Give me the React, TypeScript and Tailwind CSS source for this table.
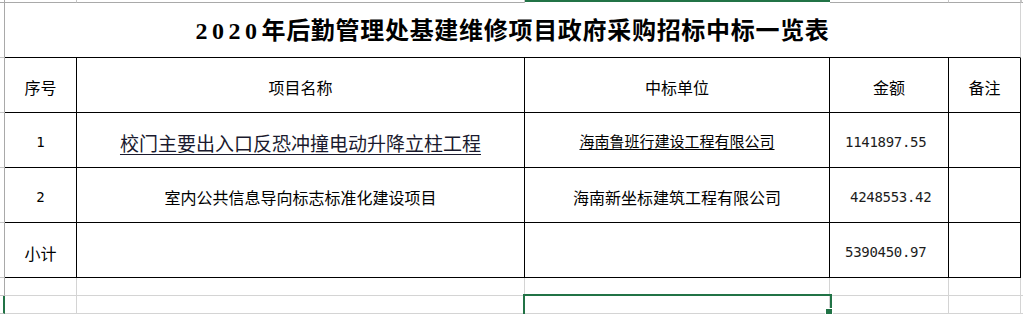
const cjk = '"Noto Sans CJK SC", sans-serif';
const mono = '"DejaVu Sans Mono", monospace';

const cols = ["w-[72px]", "w-[448px]", "w-[305px]", "w-[119px]", "w-[72px]"];

const rows = [
  { no: "1", name: "校门主要出入口反恐冲撞电动升降立柱工程", company: "海南鲁班行建设工程有限公司", amount: "1141897.55", link: true },
  { no: "2", name: "室内公共信息导向标志标准化建设项目", company: "海南新坐标建筑工程有限公司", amount: "4248553.42", link: false },
];

function RowHead({ h, selected }: { h: string; selected?: boolean }) {
  return (
    <div
      className={`${h} w-[5px] shrink-0 border-b border-[#c6c6c6] ${
        selected ? "border-r-2 border-r-[#217346]" : "border-r border-r-[#a9a9a9]"
      }`}
    />
  );
}

function Cell({
  w,
  className = "",
  children,
}: {
  w: string;
  className?: string;
  children?: React.ReactNode;
}) {
  return (
    <div className={`${w} shrink-0 flex items-center justify-center border-r border-b border-black ${className}`}>
      {children}
    </div>
  );
}

function Amount({ value }: { value: string }) {
  return (
    <span className="text-[14px] tracking-[-0.3px] text-[#1c1c1c]" style={{ fontFamily: mono }}>
      {value}
    </span>
  );
}

export default function App() {
  return (
    <div className="relative w-[1023px] h-[314px] overflow-hidden bg-white text-black" style={{ fontFamily: cjk }}>
      {/* column header remnant */}
      <div className="flex h-[3px]">
        <div className="w-[5px] shrink-0 border-r border-b border-[#a9a9a9]" />
        {cols.map((w, i) =>
          i === 2 ? (
            <div key={i} className={`${w} shrink-0 border-t-2 border-[#217346]`} />
          ) : (
            <div key={i} className={`${w} shrink-0 border-r border-r-[#c6c6c6] border-b border-b-[#a9a9a9]`} />
          )
        )}
        <div className="flex-1 border-l border-l-[#c6c6c6] border-b border-b-[#a9a9a9]" />
      </div>

      {/* title */}
      <div className="flex h-[55px]">
        <RowHead h="h-[55px]" />
        <div className="w-[1016px] shrink-0 flex items-center justify-center border-b border-black border-r border-r-[#d4d4d4] pt-[2px]">
          <span
            className="text-[24px] font-bold tracking-[0.7px] leading-none"
            style={{ fontFamily: '"Liberation Serif", "Noto Sans CJK SC", serif' }}
          >
            <span className="tracking-[4.5px]">2020</span>年后勤管理处基建维修项目政府采购招标中标一览表
          </span>
        </div>
      </div>

      {/* header */}
      <div className="flex h-[55px] text-[16px]">
        <RowHead h="h-[55px]" />
        <Cell w={cols[0]} className="pt-[3px]">序号</Cell>
        <Cell w={cols[1]} className="pt-[3px]">项目名称</Cell>
        <Cell w={cols[2]} className="pt-[3px]">中标单位</Cell>
        <Cell w={cols[3]} className="pt-[3px]">金额</Cell>
        <Cell w={cols[4]} className="pt-[3px]">备注</Cell>
      </div>

      {rows.map((r) => (
        <div key={r.no} className="flex h-[55px] text-[16px]">
          <RowHead h="h-[55px]" />
          <Cell w={cols[0]} className="pt-[4px]">
            <span className="text-[14px]" style={{ fontFamily: mono }}>{r.no}</span>
          </Cell>
          <Cell w={cols[1]} className="pt-[4px]">
            {r.link ? (
              <span className="text-[19px] leading-none underline underline-offset-[3px] text-[#1a1a2e]">{r.name}</span>
            ) : (
              <span>{r.name}</span>
            )}
          </Cell>
          <Cell w={cols[2]} className={r.link ? "pt-0" : "pt-[4px]"}>
            {r.link ? (
              <span className="text-[15px] leading-none underline underline-offset-[2px]">{r.company}</span>
            ) : (
              <span>{r.company}</span>
            )}
          </Cell>
          <Cell w={cols[3]} className={`justify-start pt-[5px] ${r.link ? "pl-[15px]" : "pl-[20px]"}`}>
            <Amount value={r.amount} />
          </Cell>
          <Cell w={cols[4]} />
        </div>
      ))}

      {/* subtotal */}
      <div className="flex h-[55px] text-[16px]">
        <RowHead h="h-[55px]" />
        <Cell w={cols[0]} className="pt-[5px]">小计</Cell>
        <Cell w={cols[1]} />
        <Cell w={cols[2]} />
        <Cell w={cols[3]} className="justify-start pl-[15px] pt-[5px]">
          <Amount value="5390450.97" />
        </Cell>
        <Cell w={cols[4]} />
      </div>

      {/* blank grid rows */}
      {[0, 1].map((i) => (
        <div key={i} className="flex h-[18px]">
          <RowHead h="h-[18px]" selected={i === 1} />
          {cols.map((w, j) => (
            <div key={j} className={`${w} shrink-0 border-r border-b border-[#d4d4d4]`} />
          ))}
          <div className="flex-1 border-b border-[#d4d4d4]" />
        </div>
      ))}

      {/* active cell */}
      <div className="absolute left-[523px] top-[294px] w-[309px] h-[22px] border-2 border-[#217346]" />
      <div className="absolute left-[826px] top-[309px] w-[6px] h-[6px] bg-[#217346] outline outline-1 outline-white" />
    </div>
  );
}
